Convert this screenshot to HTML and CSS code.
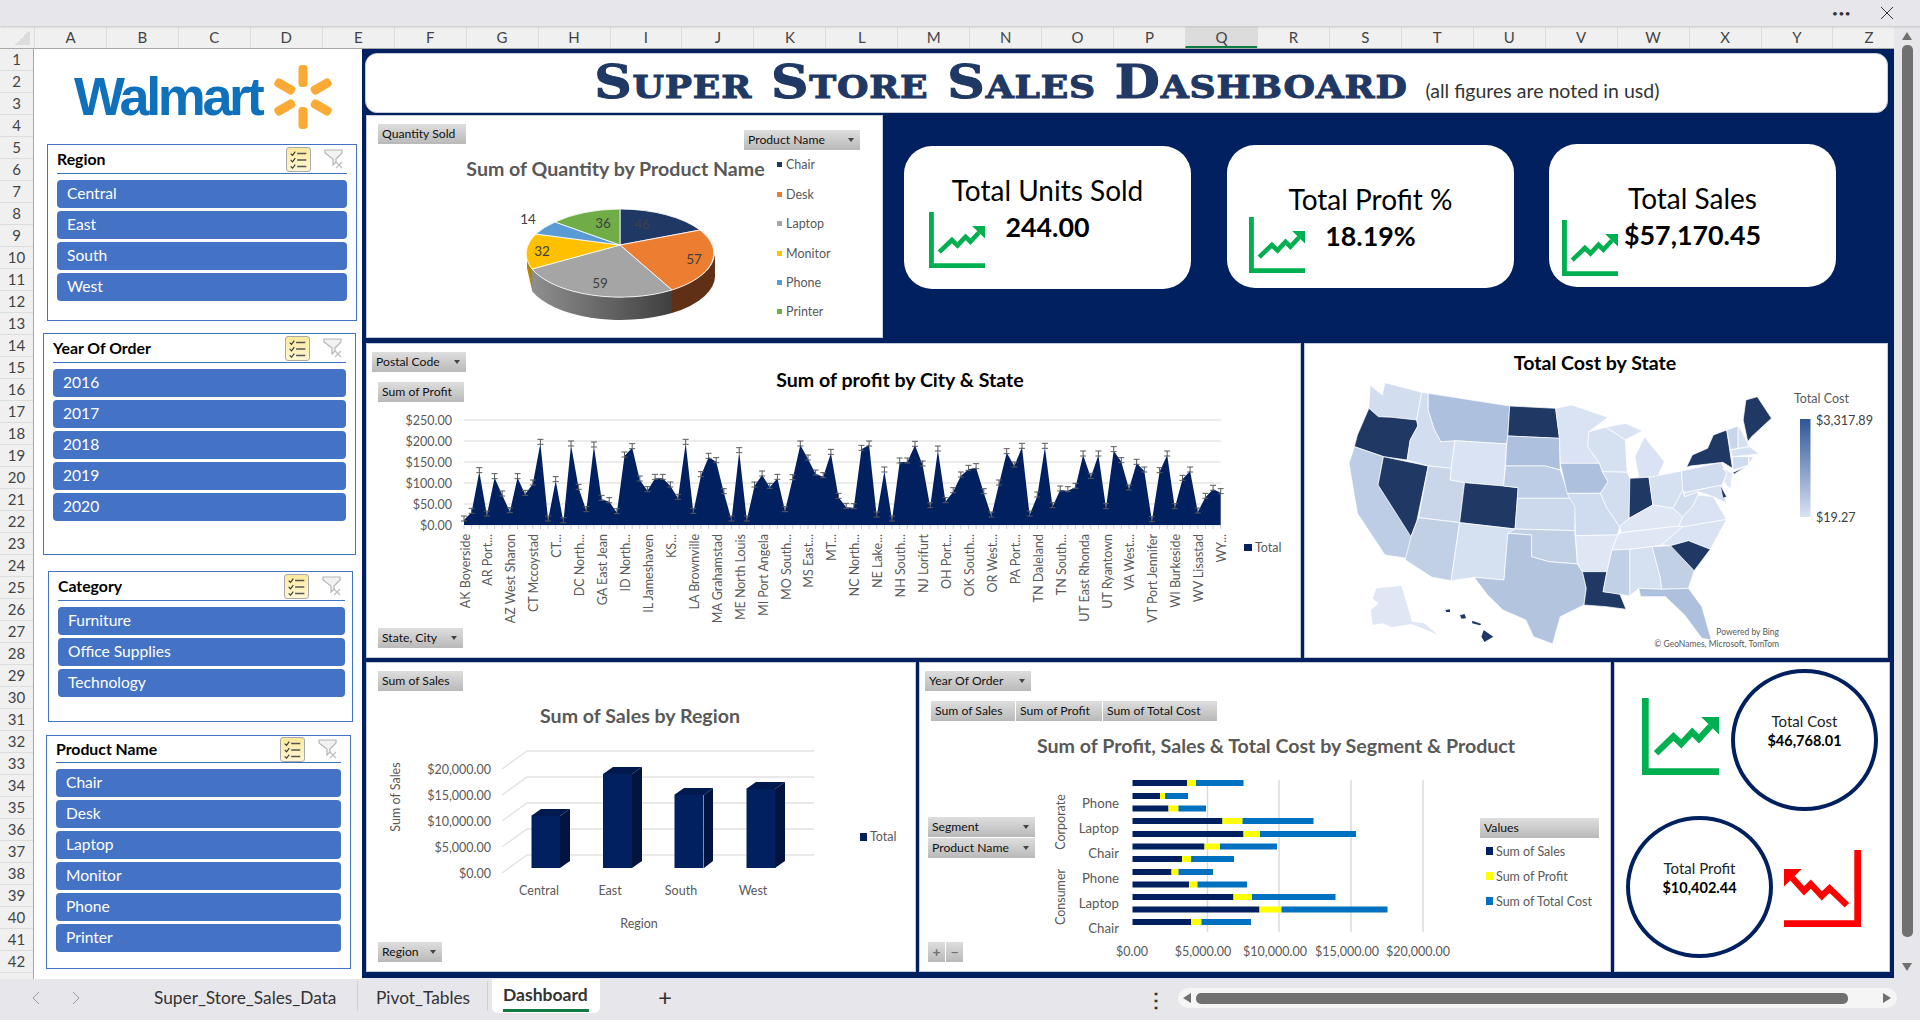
FILE: index.html

```html
<!DOCTYPE html>
<html lang="en">
<head>
  <meta charset="UTF-8" />
  <title>Super Store Sales Dashboard</title>
  <link rel="stylesheet" href="styles.css">
</head>
<body>

  <svg class="defs" width="0" height="0">
    <symbol id="trend" viewBox="0 0 230 230">
      <path d="M10 0V220H230" fill="none" stroke="currentColor" stroke-width="20"/>
      <path d="M42 165L94 115L117 137L150 102L170 122L205 84" fill="none" stroke="currentColor" stroke-width="19"/>
      <path d="M177 57H230V109Z" fill="currentColor"/>
    </symbol>
    <symbol id="multi" viewBox="0 0 25 25">
      <path d="M4 6l2 2 3-4M4 13l2 2 3-4M4 20l2 2 3-4" fill="none" stroke="#333" stroke-width="1.2"/>
      <path d="M11 6h10M11 13h10M11 20h10" stroke="#555" stroke-width="1.6"/>
    </symbol>
    <symbol id="funnel" viewBox="0 0 20 20">
      <path d="M1 1H18V4L12 10V13L9 16V10L1 4Z" fill="#f2f2f2" stroke="#b5b5b5" stroke-width="1.2"/>
      <path d="M12 13l6 6M18 13l-6 6" stroke="#bdbdbd" stroke-width="1.2"/>
    </symbol>
  </svg>

  <div class="topbar">
    <span class="dots">•••</span>
    <svg class="close" viewBox="0 0 14 14"><path d="M1 1L13 13M13 1L1 13" stroke="#333" stroke-width="1"/></svg>
  </div>

  <div class="workspace">
    <div class="grid-area">
      <div class="col-header">
        <div class="corner"><span class="corner-mark"></span></div>
        <span>A</span><span>B</span><span>C</span><span>D</span><span>E</span><span>F</span><span>G</span><span>H</span><span>I</span><span>J</span><span>K</span><span>L</span><span>M</span><span>N</span><span>O</span><span>P</span><span class="active">Q</span><span>R</span><span>S</span><span>T</span><span>U</span><span>V</span><span>W</span><span>X</span><span>Y</span><span>Z</span>
      </div>
      <div class="sheet-body">
        <div class="row-header">
          <span>1</span><span>2</span><span>3</span><span>4</span><span>5</span><span>6</span><span>7</span><span>8</span><span>9</span><span>10</span><span>11</span><span>12</span><span>13</span><span>14</span><span>15</span><span>16</span><span>17</span><span>18</span><span>19</span><span>20</span><span>21</span><span>22</span><span>23</span><span>24</span><span>25</span><span>26</span><span>27</span><span>28</span><span>29</span><span>30</span><span>31</span><span>32</span><span>33</span><span>34</span><span>35</span><span>36</span><span>37</span><span>38</span><span>39</span><span>40</span><span>41</span><span>42</span>
        </div>

        <div class="sidebar">
          <div class="logo">
            <span class="logo-text">Walmart</span>
            <svg class="spark" viewBox="-32 -32 64 64">
              <g fill="#fbab35">
                <rect x="-4.5" y="-32" width="9" height="22" rx="3.5"/>
                <rect x="-4.5" y="-32" width="9" height="22" rx="3.5" transform="rotate(60)"/>
                <rect x="-4.5" y="-32" width="9" height="22" rx="3.5" transform="rotate(120)"/>
                <rect x="-4.5" y="-32" width="9" height="22" rx="3.5" transform="rotate(180)"/>
                <rect x="-4.5" y="-32" width="9" height="22" rx="3.5" transform="rotate(240)"/>
                <rect x="-4.5" y="-32" width="9" height="22" rx="3.5" transform="rotate(300)"/>
              </g>
            </svg>
          </div>

          <div class="slicer slicer-region">
            <div class="slicer-head">
              <span class="slicer-title">Region</span>
              <span class="multi-btn"><svg><use href="#multi"/></svg></span>
              <svg class="funnel"><use href="#funnel"/></svg>
            </div>
            <div class="slicer-item">Central</div>
            <div class="slicer-item">East</div>
            <div class="slicer-item">South</div>
            <div class="slicer-item">West</div>
          </div>

          <div class="slicer slicer-year">
            <div class="slicer-head">
              <span class="slicer-title">Year Of Order</span>
              <span class="multi-btn"><svg><use href="#multi"/></svg></span>
              <svg class="funnel"><use href="#funnel"/></svg>
            </div>
            <div class="slicer-item">2016</div>
            <div class="slicer-item">2017</div>
            <div class="slicer-item">2018</div>
            <div class="slicer-item">2019</div>
            <div class="slicer-item">2020</div>
          </div>

          <div class="slicer slicer-category">
            <div class="slicer-head">
              <span class="slicer-title">Category</span>
              <span class="multi-btn"><svg><use href="#multi"/></svg></span>
              <svg class="funnel"><use href="#funnel"/></svg>
            </div>
            <div class="slicer-item">Furniture</div>
            <div class="slicer-item">Office Supplies</div>
            <div class="slicer-item">Technology</div>
          </div>

          <div class="slicer slicer-product">
            <div class="slicer-head">
              <span class="slicer-title">Product Name</span>
              <span class="multi-btn"><svg><use href="#multi"/></svg></span>
              <svg class="funnel"><use href="#funnel"/></svg>
            </div>
            <div class="slicer-item">Chair</div>
            <div class="slicer-item">Desk</div>
            <div class="slicer-item">Laptop</div>
            <div class="slicer-item">Monitor</div>
            <div class="slicer-item">Phone</div>
            <div class="slicer-item">Printer</div>
          </div>
        </div>

        <div class="dashboard">
          <div class="title-panel">
            <span class="title-main">Super Store Sales Dashboard</span>
            <span class="title-note">(all figures are noted in usd)</span>
          </div>

          <div class="row-top">
            <div class="panel panel-qty">
              <svg class="chart" viewBox="366 115 517 223">
                <defs>
                  <linearGradient id="pieSide" x1="0" x2="1" y1="0" y2="0">
                    <stop offset="0" stop-color="#8f8f8f"/>
                    <stop offset="1" stop-color="#3f3f3f"/>
                  </linearGradient>
                </defs>
                <text class="t-title" x="615.5" y="176" text-anchor="middle">Sum of Quantity by Product Name</text>
                <path d="M527 258V268L532 290V269Z" fill="#b38600"/>
                <path d="M532 269A95 44.5 0 0 0 672 290V313A95 44.5 0 0 1 532 291Z" fill="url(#pieSide)"/>
                <path d="M672 290A95 44.5 0 0 0 715 253V274A95 44.5 0 0 1 672 313Z" fill="#5f3015"/>
                <g stroke="#fff" stroke-width="0.8">
                  <path d="M620 245V209A95 44.5 0 0 1 700 230Z" fill="#1f3864"/>
                  <path d="M620 245L700 230A95 44.5 0 0 1 672 290Z" fill="#ed7d31"/>
                  <path d="M620 245L672 290A95 44.5 0 0 1 532 269Z" fill="#a5a5a5"/>
                  <path d="M620 245L532 269A95 44.5 0 0 1 536 234Z" fill="#ffc000"/>
                  <path d="M620 245L536 234A95 44.5 0 0 1 555 222Z" fill="#5b9bd5"/>
                  <path d="M620 245L555 222A95 44.5 0 0 1 620 209Z" fill="#70ad47"/>
                </g>
                <g class="t-pie" text-anchor="middle">
                  <text x="642" y="229">46</text>
                  <text x="694" y="264">57</text>
                  <text x="600" y="288">59</text>
                  <text x="542" y="256">32</text>
                  <text x="528" y="224">14</text>
                  <text x="603" y="228">36</text>
                </g>
                <g class="t-axis">
                  <rect x="777" y="162" width="5" height="5" fill="#1f3864"/><text x="786" y="169">Chair</text>
                  <rect x="777" y="192" width="5" height="5" fill="#ed7d31"/><text x="786" y="199">Desk</text>
                  <rect x="777" y="221" width="5" height="5" fill="#a5a5a5"/><text x="786" y="228">Laptop</text>
                  <rect x="777" y="251" width="5" height="5" fill="#ffc000"/><text x="786" y="258">Monitor</text>
                  <rect x="777" y="280" width="5" height="5" fill="#5b9bd5"/><text x="786" y="287">Phone</text>
                  <rect x="777" y="309" width="5" height="5" fill="#70ad47"/><text x="786" y="316">Printer</text>
                </g>
              </svg>
              <div class="chip chip-qty-sold">Quantity Sold</div>
              <div class="chip menu chip-product">Product Name</div>
            </div>

            <div class="card card-units">
              <div class="card-label">Total Units Sold</div>
              <div class="card-value">244.00</div>
              <svg class="card-icon trend-up"><use href="#trend"/></svg>
            </div>
            <div class="card card-profit">
              <div class="card-label">Total Profit %</div>
              <div class="card-value">18.19%</div>
              <svg class="card-icon trend-up"><use href="#trend"/></svg>
            </div>
            <div class="card card-sales">
              <div class="card-label">Total Sales</div>
              <div class="card-value">$57,170.45</div>
              <svg class="card-icon trend-up"><use href="#trend"/></svg>
            </div>
          </div>

          <div class="row-mid">
            <div class="panel panel-profit">
              <svg class="chart" id="profitChart" viewBox="366 343 935 315">
                <text class="t-title-dark" x="900" y="387" text-anchor="middle">Sum of profit by City &amp; State</text>
                <rect x="1244" y="544" width="8" height="7" fill="#002060"/>
                <text class="t-axis" x="1255" y="552">Total</text>
              </svg>
              <div class="chip menu chip-postal">Postal Code</div>
              <div class="chip chip-sum-profit">Sum of Profit</div>
              <div class="chip menu chip-state">State, City</div>
            </div>

            <div class="panel panel-map">
              <svg class="chart" viewBox="1304 343 584 315">
                <defs>
                  <linearGradient id="costScale" x1="0" x2="0" y1="0" y2="1">
                    <stop offset="0" stop-color="#2f5597"/>
                    <stop offset="1" stop-color="#dae3f3"/>
                  </linearGradient>
                </defs>
                <text class="t-title-dark" x="1595" y="370" text-anchor="middle">Total Cost by State</text>
                <g transform="translate(1300 340) scale(0.3827 0.3333)" stroke="#fff" stroke-width="2" stroke-linejoin="round">
                  <polygon fill="#d2def0" points="222,128 318,157 305,240 240,232 205,230 180,205 183,135 215,165"/>
                  <polygon fill="#1f3864" points="180,205 205,230 240,232 305,240 308,258 288,300 280,360 218,350 142,320 150,285"/>
                  <polygon fill="#bccde5" points="142,320 218,350 204,435 292,590 280,655 222,645 150,520 128,370"/>
                  <polygon fill="#1f3864" points="218,350 335,378 305,545 290,590 204,435"/>
                  <polygon fill="#d2def0" points="318,157 335,160 335,210 350,265 368,305 405,302 395,385 335,378 280,360 288,300 308,258 305,240"/>
                  <polygon fill="#adc0dd" points="335,160 548,198 543,288 540,312 405,302 368,305 350,265 335,210"/>
                  <polygon fill="#dae3f3" points="405,302 540,312 532,438 430,428 392,420 395,385"/>
                  <polygon fill="#c9d6ea" points="335,378 395,385 392,420 430,428 417,548 310,533"/>
                  <polygon fill="#1f3864" points="430,428 532,438 570,443 562,567 417,548"/>
                  <polygon fill="#c2d0e6" points="310,533 417,548 395,722 345,712 275,660 290,590 305,545"/>
                  <polygon fill="#d5e0f1" points="417,548 562,567 543,580 533,720 455,712 395,722"/>
                  <polygon fill="#1f3864" points="548,198 668,205 678,295 543,288"/>
                  <polygon fill="#adc0dd" points="543,288 678,295 680,390 640,378 537,378 540,312"/>
                  <polygon fill="#bccde5" points="537,378 640,378 680,390 705,475 568,475 570,443 532,438"/>
                  <polygon fill="#ccd8ec" points="568,475 705,475 720,495 718,572 562,567"/>
                  <polygon fill="#c2d0e6" points="543,580 562,567 718,572 725,672 650,665 605,650 605,585"/>
                  <polygon fill="#b3c4df" points="543,580 605,585 605,650 650,665 725,672 738,695 748,745 742,795 680,830 660,912 610,890 590,840 530,810 490,765 455,712 533,720"/>
                  <polygon fill="#dae3f3" points="668,205 710,195 805,232 755,275 752,320 782,370 680,370 678,295"/>
                  <polygon fill="#d5e0f1" points="755,275 800,262 850,300 855,397 790,395 782,370 752,320"/>
                  <polygon fill="#dae3f3" points="800,262 850,250 895,272 850,300"/>
                  <polygon fill="#adc0dd" points="680,370 782,370 790,395 805,425 785,460 698,460"/>
                  <polygon fill="#cfdcef" points="698,460 785,460 800,500 835,560 830,585 720,587 718,500 705,475"/>
                  <polygon fill="#d2def0" points="790,395 855,397 862,415 860,535 835,560 800,500 785,460 805,425"/>
                  <polygon fill="#dae3f3" points="875,350 900,290 952,365 935,410 885,412"/>
                  <polygon fill="#1f3864" points="862,415 912,412 922,495 860,535"/>
                  <polygon fill="#d5e0f1" points="912,412 997,393 1000,450 975,505 922,495"/>
                  <polygon fill="#dfe7f5" points="860,535 922,495 975,505 1000,530 990,558 840,578 835,560"/>
                  <polygon fill="#dfe7f5" points="830,585 840,578 990,558 1000,560 945,615 920,620 862,628 815,630"/>
                  <polygon fill="#dfe7f5" points="720,587 830,585 815,630 802,695 738,695 725,672"/>
                  <polygon fill="#1f3864" points="738,695 802,695 792,755 835,760 852,808 800,800 742,795 748,745"/>
                  <polygon fill="#c2d0e6" points="815,630 862,628 862,768 792,755 802,695"/>
                  <polygon fill="#d5e0f1" points="862,628 920,620 942,715 945,748 885,745 862,768"/>
                  <polygon fill="#c2d0e6" points="920,620 968,617 1030,692 1015,745 945,748 942,715"/>
                  <polygon fill="#adc0dd" points="885,745 945,748 1015,745 1050,800 1075,900 1050,895 1005,825 955,770 890,770"/>
                  <polygon fill="#dae3f3" points="945,615 1000,560 1115,538 1090,590 1072,628 1015,602 968,617"/>
                  <polygon fill="#1f3864" points="968,617 1015,602 1072,628 1030,692"/>
                  <polygon fill="#dae3f3" points="990,558 1000,530 1025,500 1040,465 1080,470 1105,520 1115,538 1000,560"/>
                  <polygon fill="#d2def0" points="975,505 1000,450 1005,470 1040,455 1040,465 1025,500 1000,530"/>
                  <polygon fill="#cfdcef" points="997,393 1100,367 1115,400 1103,435 1005,458 1000,450"/>
                  <polygon fill="#d5e0f1" points="1005,458 1103,435 1115,490 1080,470 1040,455 1005,470"/>
                  <polygon fill="#1f3864" points="1010,382 1025,345 1065,325 1080,285 1115,270 1130,385 1105,367 1020,378"/>
                  <polygon fill="#1f3864" points="1130,398 1165,380 1135,402"/>
                  <polygon fill="#dfe7f5" points="1105,385 1130,400 1125,450 1108,425 1115,400"/>
                  <polygon fill="#1f3864" points="1098,435 1115,470 1105,475"/>
                  <polygon fill="#c9d6ea" points="1115,270 1145,258 1145,325 1125,330"/>
                  <polygon fill="#d5e0f1" points="1145,255 1170,310 1172,320 1145,325"/>
                  <polygon fill="#1f3864" points="1165,180 1195,170 1232,235 1180,290 1170,305 1158,240"/>
                  <polygon fill="#d5e0f1" points="1125,330 1175,320 1200,342 1130,350"/>
                  <polygon fill="#cfdcef" points="1130,350 1172,350 1172,375 1132,390"/>
                  <polygon fill="#d5e0f1" points="1172,350 1185,350 1175,370"/>
                  <polygon fill="#dfe7f5" stroke="none" points="200,745 265,738 293,845 325,850 360,885 320,865 290,852 240,862 215,850 190,855 185,810 205,790 190,775"/>
                  <g fill="#1f3864" stroke="none">
                    <polygon points="380,810 392,808 392,816 382,816"/>
                    <polygon points="418,826 430,822 434,835 422,836"/>
                    <polygon points="450,842 474,852 470,856 450,850"/>
                    <polygon points="480,870 505,890 482,906 474,890"/>
                  </g>
                </g>
                <text class="t-axis" x="1794" y="403">Total Cost</text>
                <rect x="1800" y="419" width="10.5" height="98" fill="url(#costScale)"/>
                <text class="t-scale" x="1816" y="425">$3,317.89</text>
                <text class="t-scale" x="1816" y="522">$19.27</text>
                <text class="t-credit" x="1779" y="635" text-anchor="end">Powered by Bing</text>
                <text class="t-credit" x="1779" y="647" text-anchor="end">© GeoNames, Microsoft, TomTom</text>
              </svg>
            </div>
          </div>

          <div class="row-bot">
            <div class="panel panel-sales">
              <svg class="chart" viewBox="366 662 550 310">
                <text class="t-title" x="640" y="723" text-anchor="middle">Sum of Sales by Region</text>
                <g stroke="#e2e2e2" stroke-width="1.4" fill="none">
                  <path d="M502 769L527 751H814"/>
                  <path d="M502 795L527 777H814"/>
                  <path d="M502 821L527 803H814"/>
                  <path d="M502 847L527 829H814"/>
                  <path d="M502 873L527 855H814"/>
                </g>
                <g class="bars3d">
                  <path d="M560 868V816L570 809V861Z" fill="#00143f"/><path d="M531 816L541 809H570L560 816Z" fill="#001a50"/><rect x="531.5" y="816" width="28.5" height="52" fill="#002060"/>
                  <path d="M632 868V774L642 767V861Z" fill="#00143f"/><path d="M603 774L613 767H642L632 774Z" fill="#001a50"/><rect x="603" y="774" width="29" height="94" fill="#002060"/>
                  <path d="M704 868V795L713 788V861Z" fill="#00143f"/><path d="M674 795L684 788H713L704 795Z" fill="#001a50"/><rect x="674.5" y="795" width="29" height="73" fill="#002060"/>
                  <path d="M775 868V789L785 782V861Z" fill="#00143f"/><path d="M746 789L756 782H785L775 789Z" fill="#001a50"/><rect x="746.5" y="789" width="29" height="79" fill="#002060"/>
                </g>
                <g class="t-axis">
                  <g text-anchor="end">
                    <text x="491" y="774">$20,000.00</text>
                    <text x="491" y="800">$15,000.00</text>
                    <text x="491" y="826">$10,000.00</text>
                    <text x="491" y="852">$5,000.00</text>
                    <text x="491" y="878">$0.00</text>
                  </g>
                  <g text-anchor="middle">
                    <text x="539" y="895">Central</text>
                    <text x="610" y="895">East</text>
                    <text x="681" y="895">South</text>
                    <text x="753" y="895">West</text>
                    <text x="639" y="928">Region</text>
                    <text transform="translate(400 797) rotate(-90)">Sum of Sales</text>
                  </g>
                  <rect x="860" y="833" width="7" height="8" fill="#002060"/>
                  <text x="870" y="841">Total</text>
                </g>
              </svg>
              <div class="chip chip-sum-sales">Sum of Sales</div>
              <div class="chip menu chip-region">Region</div>
            </div>

            <div class="panel panel-segment">
              <svg class="chart" viewBox="919 662 692 310">
                <text class="t-title" x="1276" y="753" text-anchor="middle">Sum of Profit, Sales &amp; Total Cost by Segment &amp; Product</text>
                <g stroke="#d9d9d9" stroke-width="1.4">
                  <path d="M1207.5 780V932M1279 780V932M1351 780V932M1423 780V932"/>
                </g>
                <g>
                  <rect x="1132.5" y="780" width="55" height="6" fill="#002060"/><rect x="1187" y="780" width="9" height="6" fill="#ff0"/><rect x="1196" y="780" width="47.500" height="6" fill="#0070c0"/>
                  <rect x="1132.5" y="793" width="27.500" height="6" fill="#002060"/><rect x="1160" y="793" width="5" height="6" fill="#ff0"/><rect x="1165" y="793" width="23" height="6" fill="#0070c0"/>
                  <rect x="1132.5" y="805.500" width="36" height="6" fill="#002060"/><rect x="1168.500" y="805.500" width="10" height="6" fill="#ff0"/><rect x="1178.500" y="805.500" width="27.500" height="6" fill="#0070c0"/>
                  <rect x="1132.5" y="818" width="90" height="6" fill="#002060"/><rect x="1222.500" y="818" width="20" height="6" fill="#ff0"/><rect x="1242.500" y="818" width="71" height="6" fill="#0070c0"/>
                  <rect x="1132.5" y="831" width="111" height="6" fill="#002060"/><rect x="1243.500" y="831" width="16.500" height="6" fill="#ff0"/><rect x="1260" y="831" width="96" height="6" fill="#0070c0"/>
                  <rect x="1132.5" y="843.500" width="72" height="6" fill="#002060"/><rect x="1204.500" y="843.500" width="15.500" height="6" fill="#ff0"/><rect x="1220" y="843.500" width="57" height="6" fill="#0070c0"/>
                  <rect x="1132.5" y="856" width="49.500" height="6" fill="#002060"/><rect x="1182" y="856" width="9" height="6" fill="#ff0"/><rect x="1191" y="856" width="43" height="6" fill="#0070c0"/>
                  <rect x="1132.5" y="869" width="39" height="6" fill="#002060"/><rect x="1171.500" y="869" width="7" height="6" fill="#ff0"/><rect x="1178.500" y="869" width="34.500" height="6" fill="#0070c0"/>
                  <rect x="1132.5" y="881.500" width="56.500" height="6" fill="#002060"/><rect x="1189" y="881.500" width="8.500" height="6" fill="#ff0"/><rect x="1197.500" y="881.500" width="49.500" height="6" fill="#0070c0"/>
                  <rect x="1132.5" y="894" width="101" height="6" fill="#002060"/><rect x="1233.500" y="894" width="18.500" height="6" fill="#ff0"/><rect x="1252" y="894" width="83.500" height="6" fill="#0070c0"/>
                  <rect x="1132.5" y="906.500" width="127" height="6" fill="#002060"/><rect x="1259.500" y="906.500" width="22" height="6" fill="#ff0"/><rect x="1281.500" y="906.500" width="106" height="6" fill="#0070c0"/>
                  <rect x="1132.5" y="919" width="58.500" height="6" fill="#002060"/><rect x="1191" y="919" width="10.500" height="6" fill="#ff0"/><rect x="1201.500" y="919" width="49.500" height="6" fill="#0070c0"/>
                </g>
                <g class="t-axis">
                  <g class="t-cat" text-anchor="end">
                    <text x="1119" y="808">Phone</text>
                    <text x="1119" y="833">Laptop</text>
                    <text x="1119" y="858">Chair</text>
                    <text x="1119" y="883">Phone</text>
                    <text x="1119" y="908">Laptop</text>
                    <text x="1119" y="933">Chair</text>
                  </g>
                  <g text-anchor="middle">
                    <text transform="translate(1065 822) rotate(-90)">Corporate</text>
                    <text transform="translate(1065 897) rotate(-90)">Consumer</text>
                    <text x="1132" y="956">$0.00</text>
                    <text x="1203" y="956">$5,000.00</text>
                    <text x="1275" y="956">$10,000.00</text>
                    <text x="1347" y="956">$15,000.00</text>
                    <text x="1418" y="956">$20,000.00</text>
                  </g>
                  <rect x="1486" y="847" width="7" height="8" fill="#002060"/><text x="1496" y="856">Sum of Sales</text>
                  <rect x="1486" y="872" width="7" height="8" fill="#ff0"/><text x="1496" y="881">Sum of Profit</text>
                  <rect x="1486" y="897" width="7" height="8" fill="#0070c0"/><text x="1496" y="906">Sum of Total Cost</text>
                </g>
              </svg>
              <div class="chip menu chip-year">Year Of Order</div>
              <div class="chip-strip">
                <div class="chip flat">Sum of Sales</div>
                <div class="chip flat">Sum of Profit</div>
                <div class="chip flat">Sum of Total Cost</div>
              </div>
              <div class="chip-stack">
                <div class="chip flat menu">Segment</div>
                <div class="chip flat menu">Product Name</div>
              </div>
              <div class="chip chip-values">Values</div>
              <div class="chip-zoom">
                <div class="chip flat">+</div>
                <div class="chip flat">−</div>
              </div>
            </div>

            <div class="panel panel-totals">
              <div class="totals-row totals-cost">
                <svg class="totals-icon trend-up"><use href="#trend"/></svg>
                <div class="ring">
                  <span>Total Cost</span>
                  <b>$46,768.01</b>
                </div>
              </div>
              <div class="totals-row totals-margin">
                <div class="ring">
                  <span>Total Profit</span>
                  <b>$10,402.44</b>
                </div>
                <svg class="totals-icon trend-down"><use href="#trend"/></svg>
              </div>
            </div>
          </div>
        </div>
      </div>
    </div>

    <div class="vscroll">
      <span class="arrow-up"></span>
      <span class="vthumb"></span>
      <span class="arrow-down"></span>
    </div>
  </div>

  <div class="statusbar">
    <svg class="nav-arrow" viewBox="0 0 8 14"><path d="M7 1L1 7L7 13" fill="none" stroke="#999" stroke-width="1"/></svg>
    <svg class="nav-arrow next" viewBox="0 0 8 14"><path d="M1 1L7 7L1 13" fill="none" stroke="#999" stroke-width="1"/></svg>
    <span class="tab tab-data">Super_Store_Sales_Data</span>
    <span class="tab tab-pivot">Pivot_Tables</span>
    <span class="tab tab-dash"><span class="tab-name">Dashboard</span></span>
    <span class="add-sheet">+</span>
    <span class="more">⋮</span>
    <div class="hscroll">
      <span class="arrow-left"></span>
      <span class="hthumb"></span>
      <span class="arrow-right"></span>
    </div>
  </div>

  <script src="charts.js"></script>
</body>
</html>
```

FILE: styles.css

```css
* {
  box-sizing: border-box;
}

body {
  margin: 0;
  width: 1920px;
  height: 1020px;
  overflow: hidden;
  font-family: Lato, "Liberation Sans", sans-serif;
  background-color: #e6e6eb;
  display: flex;
  flex-direction: column;
}

.defs {
  position: absolute;
}

/* window strip */
.topbar {
  height: 26px;
  flex: none;
  background-color: #e6e6eb;
  box-shadow: 0 1px 2px #c4c4c4;
  display: flex;
  align-items: center;
  justify-content: flex-end;
  padding-right: 26px;
  position: relative;
}

.dots {
  font-size: 10px;
  letter-spacing: 0.5px;
  color: #333;
  margin-right: 29px;
}

.close {
  width: 14px;
  height: 14px;
}

.workspace {
  height: 953px;
  flex: none;
  display: flex;
}

.grid-area {
  width: 1894px;
  display: flex;
  flex-direction: column;
}

/* sheet headers */
.col-header {
  height: 23px;
  flex: none;
  display: flex;
  background-color: #f0f0f0;
  border-bottom: 1px solid #a8a8a8;
  overflow: hidden;
}

.corner {
  width: 34px;
  flex: none;
  display: flex;
  justify-content: flex-end;
  align-items: flex-end;
  padding: 0 4px 3px 0;
}

.corner-mark {
  width: 15px;
  height: 15px;
  background: linear-gradient(135deg, transparent 50%, #dcdcdc 50%);
}

.col-header span:not(.corner-mark) {
  width: 71.95px;
  flex: none;
  text-align: center;
  font-size: 15px;
  line-height: 22px;
  color: #444;
  border-left: 1px solid #dcdcdc;
}

.col-header .active {
  background-color: #dcdcdc;
  color: #107c41;
  border-bottom: 2px solid #107c41;
}

.sheet-body {
  flex: 1;
  display: flex;
  min-height: 0;
}

.row-header {
  width: 34px;
  flex: none;
  background-color: #f0f0f0;
  border-right: 1px solid #a8a8a8;
  overflow: hidden;
}

.row-header span {
  display: block;
  height: 22px;
  text-align: center;
  font-size: 15px;
  line-height: 21px;
  color: #444;
  border-bottom: 1px solid #dcdcdc;
}

/* slicers */
.sidebar {
  width: 328px;
  flex: none;
  background-color: white;
  display: flex;
  flex-direction: column;
}

.logo {
  height: 95px;
  flex: none;
  display: flex;
  align-items: center;
  padding-left: 40px;
}

.logo-text {
  font-family: "Liberation Sans", sans-serif;
  font-weight: bold;
  font-size: 54px;
  letter-spacing: -3.4px;
  color: #0f70bc;
  margin-top: -1px;
}

.spark {
  width: 64px;
  height: 64px;
  margin-left: 10px;
}

.slicer {
  border: 1.5px solid #4472c4;
  padding: 0 9px;
  flex: none;
}

.slicer-region {
  margin-left: 13px;
  width: 310px;
  height: 177px;
}

.slicer-year {
  margin: 12px 0 0 9px;
  width: 313px;
  height: 222px;
}

.slicer-category {
  margin: 16px 0 0 14px;
  width: 305px;
  height: 151px;
  padding-right: 7px;
}

.slicer-product {
  margin: 13px 0 0 12px;
  width: 305px;
  height: 234px;
}

.slicer-head {
  height: 29px;
  display: flex;
  align-items: center;
  border-bottom: 1.5px solid #4472c4;
  margin-bottom: 6px;
}

.slicer-product .slicer-head {
  height: 27px;
  margin-bottom: 5.5px;
}

.slicer-title {
  font-weight: bold;
  font-size: 15.8px;
  margin-top: -2px;
  color: black;
  flex: 1;
}

.multi-btn {
  width: 25px;
  height: 25px;
  border: 1px solid #a9a9a9;
  border-radius: 3px;
  background: linear-gradient(#fde99b, #fff6d5);
}

.multi-btn svg {
  display: block;
  width: 23px;
  height: 23px;
}

.funnel {
  width: 20px;
  height: 20px;
  margin: 0 3px 0 13px;
}

.slicer-item {
  height: 28px;
  margin-bottom: 3px;
  padding-left: 10px;
  background-color: #4472c4;
  border-radius: 4px;
  color: white;
  font-size: 15.6px;
  line-height: 27px;
}

/* dashboard */
.dashboard {
  flex: 1;
  min-width: 0;
  height: 929px;
  background-color: #002060;
  padding: 4px 6px 6px 4px;
  display: flex;
  flex-direction: column;
}

.title-panel {
  height: 60px;
  flex: none;
  margin-left: -1px;
  background-color: white;
  border-radius: 12px;
  border: 1px solid #c3cad8;
  display: flex;
  justify-content: center;
  align-items: baseline;
  padding-top: 2px;
}

/* DejaVu is narrower than the original face, so it is widened with a scale;
   the side margins make room for what the scale adds */
.title-main {
  display: inline-block;
  margin: 0 47px;
  transform: scaleX(1.13);
  font-family: "DejaVu Serif", serif;
  font-weight: bold;
  font-variant: small-caps;
  font-size: 46px;
  letter-spacing: 0.7px;
  -webkit-text-stroke: 1px #1f3864;
  line-height: 52px;
  color: #1f3864;
}

.title-note {
  font-size: 19.5px;
  color: #333;
  margin-left: 18px;
}

.panel {
  position: relative;
  background-color: white;
  outline: 1px solid #c3cad8;
  outline-offset: -1px;
  flex: none;
}

.chart {
  position: absolute;
  inset: 0;
  width: 100%;
  height: 100%;
}

.row-top {
  height: 223px;
  flex: none;
  margin-top: 2px;
  display: flex;
  align-items: flex-start;
}

.panel-qty {
  width: 517px;
  height: 223px;
}

.card {
  position: relative;
  width: 287px;
  height: 143px;
  flex: none;
  background-color: white;
  border-radius: 28px;
  text-align: center;
  color: black;
}

.card-units {
  margin: 31px 0 0 21px;
  padding-top: 25px;
}

.card-profit {
  margin: 30px 0 0 36px;
  padding-top: 35px;
}

.card-sales {
  margin: 29px 0 0 35px;
  padding-top: 35px;
}

.card-label {
  font-size: 28px;
  line-height: 38px;
}

.card-value {
  font-size: 26.8px;
  font-weight: bold;
  line-height: 36px;
}

.card-icon {
  position: absolute;
  width: 56px;
  height: 56px;
}

.card-units .card-icon {
  left: 25px;
  top: 66px;
}

.card-profit .card-icon {
  left: 22px;
  top: 72px;
}

.card-sales .card-icon {
  left: 13px;
  top: 76px;
}

.trend-up {
  color: #00b050;
}

.trend-down {
  color: red;
  transform: scaleX(-1);
}

.row-mid {
  height: 315px;
  flex: none;
  margin-top: 5px;
  display: flex;
}

.panel-profit {
  width: 935px;
  height: 315px;
}

.panel-map {
  width: 584px;
  height: 315px;
  margin-left: 3px;
}

.row-bot {
  height: 310px;
  flex: none;
  margin-top: 4px;
  display: flex;
}

.panel-sales {
  width: 550px;
  height: 310px;
}

.panel-segment {
  width: 692px;
  height: 310px;
  margin-left: 3px;
}

.panel-totals {
  width: 276px;
  height: 310px;
  margin-left: 3px;
}

/* pivot field buttons */
.chip {
  height: 20px;
  padding-left: 4px;
  font-size: 12.2px;
  line-height: 20px;
  color: #111;
  background: linear-gradient(#dedede, #b9b9b9);
  white-space: nowrap;
  position: absolute;
}

.chip.flat {
  position: relative;
  flex: none;
}

.chip.menu::after {
  content: "";
  position: absolute;
  right: 6px;
  top: 8px;
  border: 3.5px solid transparent;
  border-top: 4px solid #444;
  border-bottom: 0;
}

.chip-qty-sold { left: 12px; top: 9px; width: 88px; }
.chip-product { left: 378px; top: 15px; width: 116px; }
.chip-postal { left: 6px; top: 9px; width: 94px; }
.chip-sum-profit { left: 12px; top: 39px; width: 86px; }
.chip-state { left: 12px; top: 285px; width: 85px; }
.chip-sum-sales { left: 12px; top: 9px; width: 85px; }
.chip-region { left: 12px; top: 280px; width: 64px; }
.chip-year { left: 6px; top: 9px; width: 106px; }
.chip-values { left: 561px; top: 156px; width: 119px; }

.chip-strip {
  position: absolute;
  left: 12px;
  top: 39px;
  display: flex;
  gap: 1px;
}

.chip-strip .chip:nth-child(1) { width: 84px; }
.chip-strip .chip:nth-child(2) { width: 86px; }
.chip-strip .chip:nth-child(3) { width: 114px; }

.chip-stack {
  position: absolute;
  left: 9px;
  top: 155px;
  width: 107px;
  display: flex;
  flex-direction: column;
  gap: 1px;
}

.chip-zoom {
  position: absolute;
  left: 9px;
  top: 280px;
  display: flex;
  gap: 1px;
}

.chip-zoom .chip {
  width: 17px;
  padding: 0;
  text-align: center;
  font-weight: bold;
  font-size: 14px;
  color: #707070;
}

/* chart text */
.t-title {
  font-size: 19.6px;
  font-weight: bold;
  fill: #595959;
}

.t-title-dark {
  font-size: 19.6px;
  font-weight: bold;
  fill: black;
}

.t-axis {
  font-size: 12.5px;
  fill: #595959;
}

.t-cat {
  font-size: 13.2px;
}

.t-pie {
  font-size: 13.5px;
  fill: #404040;
}

.t-scale {
  font-size: 12.6px;
  fill: #404040;
}

.t-credit {
  font-size: 8.5px;
  fill: #595959;
}

/* totals */
.panel-totals {
  padding: 7px 12px 0;
}

.totals-row {
  display: flex;
  align-items: center;
}

.totals-cost {
  margin-bottom: 5px;
  justify-content: space-between;
  padding-left: 16px;
}

.totals-margin {
  gap: 11px;
}

.totals-icon {
  width: 77px;
  height: 77px;
  flex: none;
}

.totals-cost .totals-icon {
  margin-top: -7px;
}

.totals-margin .totals-icon {
  margin-top: 2px;
}

.ring {
  width: 147px;
  height: 142px;
  flex: none;
  border: 4px solid #002060;
  border-radius: 50%;
  padding-top: 38px;
  display: flex;
  flex-direction: column;
  align-items: center;
  font-size: 15px;
  line-height: 20px;
  color: #222;
}

.ring b {
  color: black;
  font-size: 14.5px;
}

/* scrollbars */
.vscroll {
  width: 26px;
  flex: none;
  margin-top: 2px;
  margin-bottom: -3px;
  padding: 0 3px;
  display: flex;
  flex-direction: column;
  align-items: center;
}

.arrow-up {
  border: 5px solid transparent;
  border-bottom: 8px solid #707070;
  border-top: 0;
  margin-top: 4px;
}

.vthumb {
  width: 11px;
  height: 892px;
  margin-top: 5px;
  background-color: #707070;
  border-radius: 5px;
}

.arrow-down {
  border: 5px solid transparent;
  border-top: 8px solid #707070;
  border-bottom: 0;
  margin-top: 26px;
}

.statusbar {
  flex: 1;
  display: flex;
  align-items: flex-start;
  position: relative;
  color: #333;
  font-size: 17.3px;
}

.nav-arrow {
  width: 8px;
  height: 14px;
  margin: 12px 0 0 32px;
  flex: none;
}

.nav-arrow.next {
  margin-left: 32px;
}

.tab {
  line-height: 38px;
  flex: none;
}

.tab-data {
  margin-left: 74px;
  width: 204px;
  border-right: 1px solid #cfcfcf;
  height: 30px;
  margin-top: 2px;
  line-height: 34px;
}

.tab-pivot {
  width: 130px;
  padding-left: 18px;
  border-right: 1px solid #cfcfcf;
  height: 30px;
  margin-top: 2px;
  line-height: 34px;
}

.tab-dash {
  margin-left: 4px;
  width: 108px;
  height: 34px;
  padding: 0 11px;
  background-color: white;
  border-radius: 0 0 6px 6px;
  font-weight: bold;
  font-size: 17.5px;
  line-height: 32px;
}

.tab-name {
  display: block;
  height: 33px;
  border-bottom: 3px solid #107c41;
  white-space: nowrap;
}

.add-sheet {
  margin-left: 58px;
  font-size: 24px;
  line-height: 36px;
}

.more {
  margin-left: 474px;
  font-size: 20px;
  font-weight: bold;
  line-height: 40px;
  width: 12px;
}

.hscroll {
  position: absolute;
  left: 1178px;
  top: 9px;
  width: 719px;
  height: 20px;
  border-radius: 10px;
  background-color: #f5f5f5;
  display: flex;
  align-items: center;
  padding: 0 5px;
}

.arrow-left {
  border: 5px solid transparent;
  border-right: 8px solid #707070;
  border-left: 0;
}

.hthumb {
  width: 652px;
  height: 11px;
  margin-left: 5px;
  background-color: #707070;
  border-radius: 5px;
}

.arrow-right {
  border: 5px solid transparent;
  border-left: 8px solid #707070;
  border-right: 0;
  margin-left: 35px;
}
```

FILE: charts.js

```js
// profit area chart, heights read off as pixel offsets from the top of the plot crop
const tips = [
  540,517,395,525,413,465,515,413,463,432,310,540,422,545,315,445,512,318,478,485,
  518,348,323,420,452,415,415,438,475,310,517,407,352,365,458,540,335,540,438,405,
  442,415,512,416,315,357,402,410,340,472,502,503,328,315,528,393,540,366,366,316,
  375,500,330,485,455,408,388,383,458,528,432,338,378,322,525,468,322,500,450,452,
  442,345,412,345,503,332,365,447,370,393,542,395,345,503,418,393,516,472,448,458
];

const labels = [
  "AK Boyerside","AR Port...","AZ West Sharon","CT Mccoystad","CT...","DC North...","GA East Jean",
  "ID North...","IL Jameshaven","KS...","LA Brownville","MA Grahamstad","ME North Louis","MI Port Angela",
  "MO South...","MS East...","MT...","NC North...","NE Lake...","NH South...","NJ Lorifurt","OH Port...",
  "OK South...","OR West...","PA Port...","TN Daleland","TN South...","UT East Rhonda","UT Ryantown",
  "VA West...","VT Port Jennifer","WI Burkeside","WV Lisastad","WY..."
];

const NS = "http://www.w3.org/2000/svg";
const chart = document.getElementById("profitChart");
const left = 464, right = 1220.7, base = 525;
const step = (right - left) / (tips.length - 1);

function add(tag, attrs, text) {
  const el = document.createElementNS(NS, tag);
  for (const k in attrs) el.setAttribute(k, attrs[k]);
  if (text) el.textContent = text;
  chart.appendChild(el);
  return el;
}

// gridlines and value axis
["$250.00", "$200.00", "$150.00", "$100.00", "$50.00", "$0.00"].forEach((t, i) => {
  const y = 420 + i * 21;
  add("line", { x1: left, x2: right, y1: y, y2: y, stroke: "#d9d9d9", "stroke-width": 1 });
  add("text", { x: 452, y: y + 5, "text-anchor": "end", class: "t-axis" }, t);
});

const pts = tips.map((v, i) => [left + i * step, 340 + v / 3]);
const area = `M${left} ${base}L` + pts.map(p => `${p[0].toFixed(1)} ${p[1].toFixed(1)}`).join("L") + `L${right} ${base}Z`;
add("path", { d: area, fill: "#002060" });

// error bars and ticks
let bars = "", ticks = "";
pts.forEach(p => {
  const x = p[0].toFixed(1), y = p[1];
  bars += `M${x} ${y - 4}V${y + 1}M${p[0] - 3} ${y - 4}h6M${p[0] - 3} ${y + 1}h6`;
  ticks += `M${x} ${base}v4`;
});
add("path", { d: bars, stroke: "#595959", "stroke-width": 1, fill: "none" });
add("path", { d: ticks, stroke: "#d0d0d0", "stroke-width": 1, fill: "none" });

labels.forEach((t, i) => {
  const x = left + i * 3 * step;
  add("text", { transform: `translate(${x + 5.5} 534) rotate(-90)`, "text-anchor": "end", class: "t-axis" }, t);
});
```
